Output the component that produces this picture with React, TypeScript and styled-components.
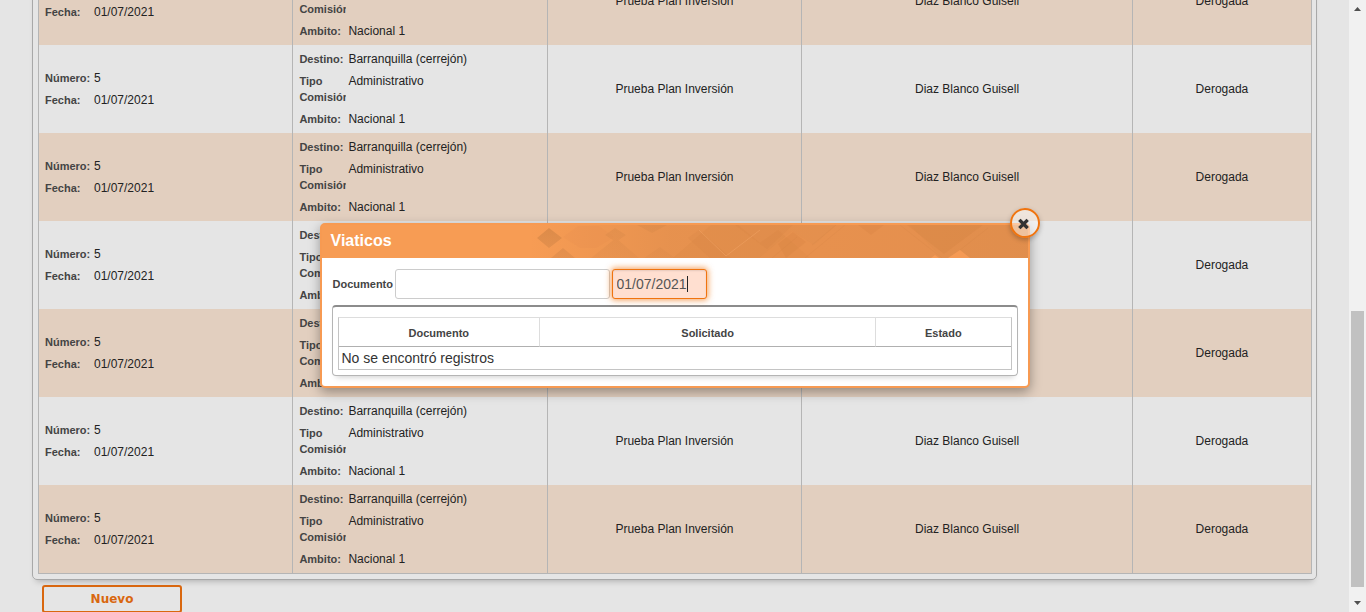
import React from 'react';
import styled, { createGlobalStyle } from 'styled-components';

const GlobalStyle = createGlobalStyle`
  *, *::before, *::after { box-sizing: border-box; }
  body {
    margin: 0;
    background: #e5e5e5;
    color: #222;
    font-family: "Liberation Sans", Arial, sans-serif;
    font-size: 12px;
    line-height: 16px;
  }
`;

const Screen = styled.div`
  display: flex;
  height: 100vh;
  overflow: hidden;
`;

const Main = styled.main`
  position: relative;
  flex: 1;
  min-width: 0;
  display: flex;
  flex-direction: column;
  justify-content: flex-end;
  padding: 0 32px;
`;

const Panel = styled.section`
  flex: none;
  padding: 5px 4px 5px 5px;
  border: 1px solid #a8a8a8;
  border-radius: 5px;
  box-shadow: 0 5px 6px -4px rgba(0, 0, 0, 0.25);
`;

const CommissionTable = styled.table`
  width: 100%;
  table-layout: fixed;
  border-spacing: 0;
  border: 1px solid #b5b5b5;
  border-top: 0;
`;

const CommissionRow = styled.tr`
  height: 88px;
  &:nth-child(odd) { background: #e2cfbf; }
`;

const Cell = styled.td<{ $center?: boolean }>`
  padding: 3px 6px;
  vertical-align: middle;
  text-align: ${(p) => (p.$center ? 'center' : 'left')};
  &:not(:last-child) { border-right: 1px solid #b5b5b5; }
`;

const FieldList = styled.dl`
  margin: 0;
`;

const Field = styled.div`
  display: flex;
  padding: 3px 0;
`;

const FieldName = styled.dt`
  flex: none;
  width: 47px;
  margin-right: 2px;
  overflow: hidden;
  color: #444;
  font-size: 11px;
  font-weight: bold;
`;

const FieldValue = styled.dd`
  margin: 0;
`;

const Actions = styled.div`
  flex: none;
  margin-bottom: -1px;
  padding: 5px 10px 0;
`;

const NewButton = styled.button`
  display: block;
  width: 140px;
  height: 28px;
  padding: 0;
  border: 2px solid #d9670f;
  border-radius: 3px;
  background: transparent;
  color: #d9670f;
  font: bold 12px "DejaVu Sans", Verdana, sans-serif;
`;

const Overlay = styled.div`
  position: absolute;
  inset: 0;
  display: flex;
  align-items: center;
  justify-content: center;
  padding-bottom: 2px;
`;

const Dialog = styled.div`
  position: relative;
  width: 710px;
  max-width: 100%;
  border: 2px solid #f79a52;
  border-radius: 5px;
  background: #fff;
  box-shadow: 0 4px 12px rgba(0, 0, 0, 0.35);
`;

const DialogHeader = styled.header`
  position: relative;
  height: 33px;
  padding: 0 9px;
  overflow: hidden;
  background: #f79c54;
`;

const DialogTitle = styled.h2`
  margin: 0;
  color: #fff;
  font-size: 16px;
  line-height: 31px;
`;

const Pattern = styled.svg`
  position: absolute;
  top: 0;
  right: 0;
`;

const CloseButton = styled.button`
  position: absolute;
  top: -17px;
  right: -12px;
  display: grid;
  place-items: center;
  width: 30px;
  height: 30px;
  padding: 0;
  border: 2px solid #f0740f;
  border-radius: 50%;
  background: rgba(255, 255, 255, 0.45);
  box-shadow: 0 2px 5px rgba(0, 0, 0, 0.25);
`;

const DialogBody = styled.div`
  padding: 10px;
`;

const SearchForm = styled.form`
  display: flex;
  align-items: center;
  gap: 2px;
  height: 32px;
`;

const SearchLabel = styled.label`
  width: 61px;
  padding-left: 1px;
  color: #444;
  font-size: 11px;
  font-weight: bold;
  white-space: nowrap;
`;

const TextBox = styled.input`
  display: block;
  width: 215px;
  height: 30px;
  padding: 0 4px;
  border: 1px solid #ccc;
  border-radius: 3px;
  outline: 0;
  color: #555;
  font: 14px "Liberation Sans", Arial, sans-serif;
`;

const DateField = styled.div`
  position: relative;
  &::after {
    content: "";
    position: absolute;
    top: 7px;
    left: 75px;
    width: 1px;
    height: 16px;
    background: #222;
  }
`;

const DateBox = styled(TextBox)`
  width: 95px;
  border-color: #f0740f;
  background: #ffdfd0;
  box-shadow: inset 0 1px 2px rgba(0, 0, 0, 0.1), 0 0 6px 1px rgba(240, 116, 15, 0.7);
  caret-color: transparent;
`;

const Results = styled.div`
  margin-top: 5px;
  padding: 10px 5px 5px;
  border: 1px solid #b5b5b5;
  border-top: 2px solid #8c8c8c;
  border-radius: 4px;
  box-shadow: 0 5px 6px -4px rgba(0, 0, 0, 0.2);
`;

const ResultTable = styled.table`
  width: 100%;
  table-layout: fixed;
  border-spacing: 0;
  border: 1px solid #c4c4c4;
  border-top-color: #ddd;
  color: #333;
`;

const ResultHead = styled.th`
  height: 29px;
  padding: 2px 0 0;
  border-bottom: 1px solid #b0b0b0;
  color: #444;
  font-size: 11px;
  &:not(:last-child) { border-right: 1px solid #ddd; }
`;

const EmptyCell = styled.td`
  height: 22px;
  padding: 0 3px;
  font-size: 14px;
`;

const ScrollTrack = styled.div`
  flex: none;
  display: flex;
  flex-direction: column;
  align-items: center;
  justify-content: space-between;
  width: 17px;
  background: #f1f1f1;
`;

const ScrollArrow = styled.svg`
  display: block;
  flex: none;
`;

const ScrollThumb = styled.div`
  width: 13px;
  height: 276px;
  margin-top: auto;
  margin-bottom: 8px;
  background: #c1c1c1;
`;

const commissions = Array.from({ length: 7 }, (_, id) => ({
  id,
  number: '5',
  date: '01/07/2021',
  destination: 'Barranquilla (cerrejón)',
  type: 'Administrativo',
  scope: 'Nacional 1',
  project: 'Prueba Plan Inversión',
  person: 'Diaz Blanco Guisell',
  status: 'Derogada',
}));

function LabeledValue({ name, value }: { name: string; value: string }) {
  return (
    <Field>
      <FieldName>{name}</FieldName>
      <FieldValue>{value}</FieldValue>
    </Field>
  );
}

function HeaderPattern() {
  return (
    <Pattern width="498" height="33" viewBox="0 0 498 33" aria-hidden="true">
      <defs>
        <linearGradient id="shade">
          <stop offset="0" stopColor="#d9894a" stopOpacity="0" />
          <stop offset="0.28" stopColor="#d9894a" stopOpacity="0.55" />
          <stop offset="1" stopColor="#d9894a" stopOpacity="0.75" />
        </linearGradient>
        <linearGradient id="facet" x1="0" y1="0" x2="0" y2="1">
          <stop offset="0" stopColor="#cf8344" stopOpacity="0.65" />
          <stop offset="1" stopColor="#d9894a" stopOpacity="0.5" />
        </linearGradient>
      </defs>
      <path d="M0 0H498V33H0Z" fill="url(#shade)" />
      <path d="M7 13L19 3L32 13L19 23Z M21 33L33 23L45 33Z" fill="url(#facet)" />
      <path d="M33 12L48 1H69L84 12L66 23H50Z" fill="#e18d4b" opacity="0.18" />
      <path d="M61 33L86 13L109 33Z M75 10L85 3L96 10L86 17Z M114 33L130 22L145 33Z M107 0L122 8L137 0Z" fill="url(#facet)" opacity="0.5" />
      <path d="M143 33L181 0H208L230 18L248 5L280 33Z" fill="#c97a3c" opacity="0.12" />
      <path d="M158 13L169 5L201 33H180Z M205 0L237 24L263 0Z" fill="#c97a3c" opacity="0.1" />
      <path d="M169 5L196 31L230 5" fill="none" stroke="#f4a565" strokeWidth="1" opacity="0.5" />
      <path d="M229 33L262 6L284 20L306 0H380L412 33Z" fill="#f19850" opacity="0.22" />
      <path d="M248 19L263 7L276 17L256 33Z M328 0L341 10L354 0Z M377 0L414 29L453 0Z" fill="#c7783b" opacity="0.16" />
      <path d="M282 20L306 0M242 33L267 12M275 33L315 0M370 0L412 33M430 25L458 3" stroke="#c77a3d" strokeWidth="1" opacity="0.12" />
      <path d="M418 33L430 25L440 33Z M401 33L405 30L409 33Z" fill="#fa9e57" opacity="0.8" />
    </Pattern>
  );
}

function ViaticosDialog() {
  return (
    <Dialog role="dialog" aria-labelledby="dialog-title">
      <DialogHeader>
        <HeaderPattern />
        <DialogTitle id="dialog-title">Viaticos</DialogTitle>
      </DialogHeader>
      <CloseButton type="button" aria-label="Cerrar">
        <svg width="26" height="26" viewBox="0 0 26 26" aria-hidden="true">
          <path d="M8.5 11L14.5 17M14.5 11L8.5 17" fill="none" stroke="#333" strokeWidth="3.3" strokeLinecap="square" />
        </svg>
      </CloseButton>
      <DialogBody>
        <SearchForm>
          <SearchLabel htmlFor="document">Documento</SearchLabel>
          <TextBox id="document" type="text" />
          <DateField>
            <DateBox type="text" aria-label="Fecha" defaultValue="01/07/2021" />
          </DateField>
        </SearchForm>
        <Results>
          <ResultTable>
            <colgroup>
              <col style={{ width: '30%' }} />
              <col style={{ width: '50%' }} />
              <col style={{ width: '20%' }} />
            </colgroup>
            <thead>
              <tr>
                <ResultHead>Documento</ResultHead>
                <ResultHead>Solicitado</ResultHead>
                <ResultHead>Estado</ResultHead>
              </tr>
            </thead>
            <tbody>
              <tr>
                <EmptyCell colSpan={3}>No se encontró registros</EmptyCell>
              </tr>
            </tbody>
          </ResultTable>
        </Results>
      </DialogBody>
    </Dialog>
  );
}

export default function App() {
  return (
    <>
      <GlobalStyle />
      <Screen>
        <Main>
          <Panel>
            <CommissionTable>
              <colgroup>
                {[20, 20, 20, 26, 14].map((width, i) => (
                  <col key={i} style={{ width: `${width}%` }} />
                ))}
              </colgroup>
              <tbody>
                {commissions.map((c) => (
                  <CommissionRow key={c.id}>
                    <Cell>
                      <FieldList>
                        <LabeledValue name="Número:" value={c.number} />
                        <LabeledValue name="Fecha:" value={c.date} />
                      </FieldList>
                    </Cell>
                    <Cell>
                      <FieldList>
                        <LabeledValue name="Destino:" value={c.destination} />
                        <LabeledValue name="Tipo Comisión:" value={c.type} />
                        <LabeledValue name="Ambito:" value={c.scope} />
                      </FieldList>
                    </Cell>
                    <Cell $center>{c.project}</Cell>
                    <Cell $center>{c.person}</Cell>
                    <Cell $center>{c.status}</Cell>
                  </CommissionRow>
                ))}
              </tbody>
            </CommissionTable>
          </Panel>
          <Actions>
            <NewButton type="button">Nuevo</NewButton>
          </Actions>
          <Overlay>
            <ViaticosDialog />
          </Overlay>
        </Main>
        <ScrollTrack aria-hidden="true">
          <ScrollArrow width="17" height="17" viewBox="0 0 17 17">
            <path d="M5 11L8.5 7L12 11Z" fill="#505050" />
          </ScrollArrow>
          <ScrollThumb />
          <ScrollArrow width="17" height="17" viewBox="0 0 17 17">
            <path d="M5 6L8.5 10L12 6Z" fill="#505050" />
          </ScrollArrow>
        </ScrollTrack>
      </Screen>
    </>
  );
}
